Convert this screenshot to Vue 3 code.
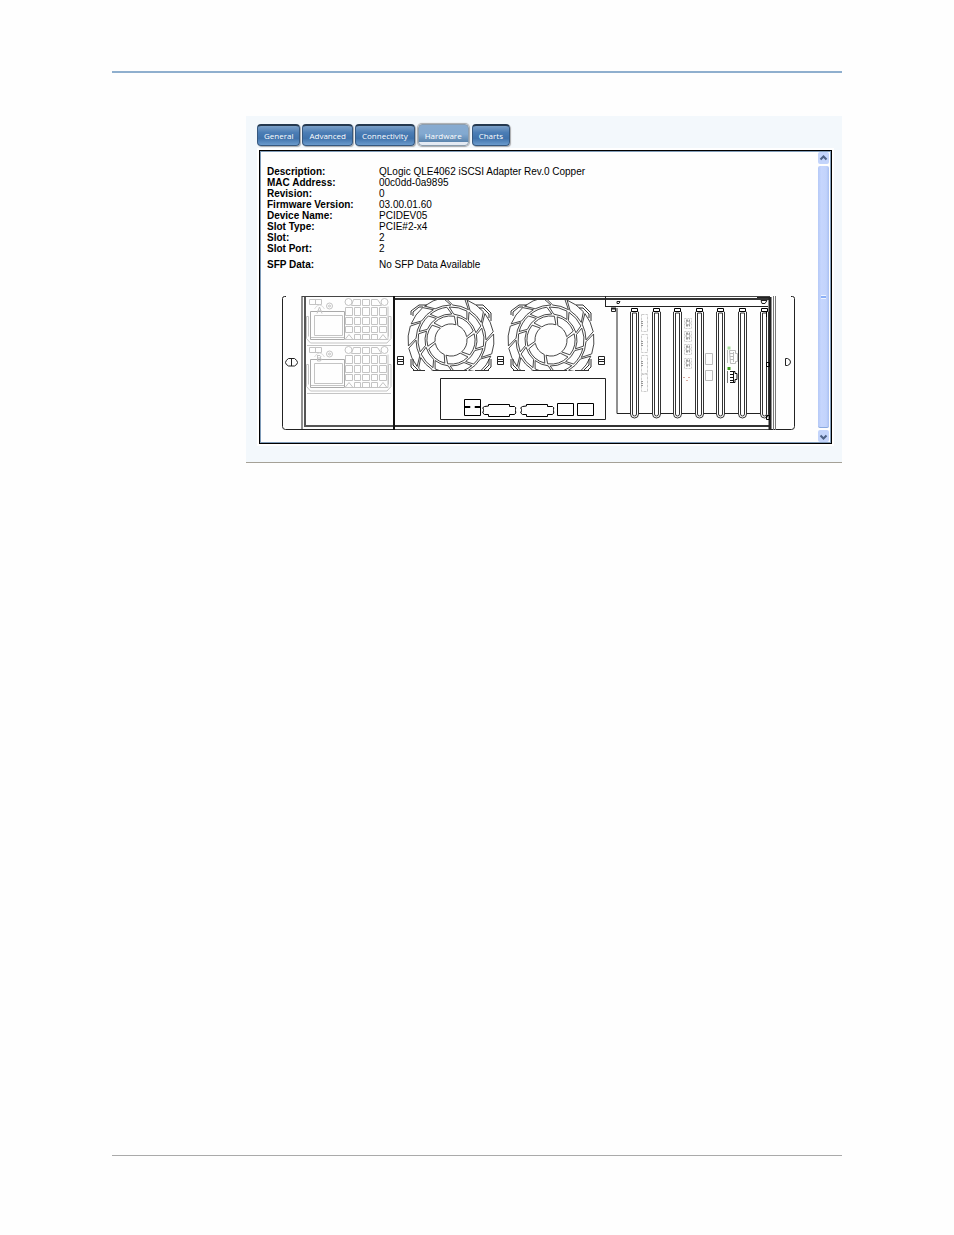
<script setup>
import { ref } from 'vue'

const tabs = ['General', 'Advanced', 'Connectivity', 'Hardware', 'Charts']
const active = ref('Hardware')

const details = [
  ['Description:', 'QLogic QLE4062 iSCSI Adapter Rev.0 Copper'],
  ['MAC Address:', '00c0dd-0a9895'],
  ['Revision:', '0'],
  ['Firmware Version:', '03.00.01.60'],
  ['Device Name:', 'PCIDEV05'],
  ['Slot Type:', 'PCIE#2-x4'],
  ['Slot:', '2'],
  ['Slot Port:', '2'],
  ['SFP Data:', 'No SFP Data Available']
]

// chassis drawing
const psus = [{ y: 0, name: 'A' }, { y: 48, name: 'B' }]
const fans = [451, 551]
const clips = [400, 500, 601]
const rails = [634, 656, 677, 699, 720, 742, 764]
const ports = [323, 336, 349, 363]

// fan guard: each ring is cut in cells, every cell leans along the swirl
const rings = [
  { r1: 16, r2: 24, n: 6, start: -5, skew: 10 },
  { r1: 26, r2: 33, n: 10, start: -12, skew: 9 },
  { r1: 35, r2: 43, n: 12, start: 3, skew: 11 }
]
const pt = (r, deg) => {
  const a = deg * Math.PI / 180
  return (r * Math.cos(a)).toFixed(2) + ' ' + (r * Math.sin(a)).toFixed(2)
}
const cells = rings.flatMap(({ r1, r2, n, start, skew }) => {
  const step = 360 / n
  const gap = 110 / r1
  return Array.from({ length: n }, (_, i) => {
    const a = start + i * step
    const b = a + step - gap
    return `M${pt(r1, a)}A${r1} ${r1} 0 0 1 ${pt(r1, b)}L${pt(r2, b - skew)}A${r2} ${r2} 0 0 0 ${pt(r2, a - skew)}Z`
  })
})
</script>

<template>
  <div class="page">
    <main class="panel">
      <nav class="tabs">
        <button v-for="t in tabs" :key="t" :class="{ active: t === active }" @click="active = t">{{ t }}</button>
      </nav>
      <section class="box">
        <div class="content">
          <table>
            <tbody>
              <tr v-for="[label, value] in details" :key="label">
                <th scope="row">{{ label }}</th>
                <td>{{ value }}</td>
              </tr>
            </tbody>
          </table>
          <svg class="chassis" viewBox="280 292 518 140" fill="none" stroke="#222">
            <defs>
              <clipPath id="fanclip"><rect x="-45" y="-40" width="90" height="71" /></clipPath>
            </defs>

            <!-- ears and frame -->
            <path d="M286 296.500h-1.500q-2 0-2 2v128q0 3 3 3H394M302 296v134M791 296.500h1.500q2 0 2 2v128q0 3-3 3H770" />
            <path d="M302 296.500H394M394 296.500H770M394 429.500H770" stroke="#444" />
            <path d="M394 299H770M394 426H770" stroke-width="2" stroke="#333" />
            <path d="M394 296v134" stroke-width="2" stroke="#111" />
            <path d="M305 297v129H393" stroke-width="2" stroke="#555" />
            <path d="M770 297v133" stroke-width="3" stroke="#222" />
            <path d="M773.500 296v134M775.500 296v134" stroke="#777" />
            <path d="M288.500 358.500h6q3 2 3 4t-3 3.500h-6q-3-1.500-3-3.500t3-4M291.500 358v8" />
            <path d="M785.500 358.500v7M785.500 358.500h2q3 1 3 3.500t-3 3.500h-2" />

            <!-- power supplies -->
            <g v-for="p in psus" :key="p.name" :transform="`translate(0 ${p.y})`" stroke="#c4c4c4">
              <path d="M306.500 316.500h2v20M306.500 316.500v22l4 4.500H387l4-4.500v-22h-2.500v20M307 345.500h84" />
              <path d="M309.500 299.500h12v5h-12zM315.500 299.500v5" />
              <circle cx="329.500" cy="306" r="3" /><circle cx="329.500" cy="306" r="1" />
              <path d="M310.500 311.500h34v28h-34z" stroke="#aaa" />
              <path d="M314.500 315.500h28v20h-28zM311 337.500h33" />
              <path d="M317 313.500l2.500-6.500 2.500 6.500M317.500 311h4" v-if="p.name === 'A'" />
              <path d="M317.500 307v6h3q1.500-1.500 0-3h-3M317.500 307.500h2.500q2 1.500 0 2.500" v-else />
              <path d="M314.500 309q2-4 5-4t5 4" stroke="#ddd" />
              <!-- vent holes -->
              <path d="M353.500 299.500h7v6h-9zM362.500 299.500h7v6h-7zM371.500 299.500h6l4 6h-10zM345.500 307.500h7v8h-7zM354.500 307.500h6v8h-6zM362.500 307.500h7v8h-7zM371.500 307.500h6v8h-6zM379.500 307.500h7v8h-7z" />
              <path d="M345.500 317.500h7v7h-7zM354.500 317.500h6v7h-6zM362.500 317.500h7v7h-7zM371.500 317.500h6v7h-6zM379.500 317.500h7v7h-7zM345.500 326.500h7v6h-7zM354.500 326.500h6v6h-6zM362.500 326.500h7v6h-7zM371.500 326.500h6v6h-6zM379.500 326.500h7v6h-7z" />
              <path d="M345 339.500l4-5 4 5M354.500 334.500h6v5h-6zM362.500 334.500h7v5h-7zM371.500 334.500h6v5h-6zM379 339.500l4-5 4 5M344 339.500h44v-33" />
              <g fill="#fff">
                <circle cx="348.500" cy="302" r="3.500" /><circle cx="384.500" cy="302" r="3.500" />
              </g>
            </g>

            <!-- fans -->
            <g v-for="x in fans" :key="x" :transform="`translate(${x} 340)`">
              <g clip-path="url(#fanclip)" stroke="#333">
                <path v-for="(d, i) in cells" :key="i" :d="d" stroke-width=".9" />
                <path d="M-40-25v-4l8-6h8M-38-24v-4l6-5h4M40-19v-8l-8-8h-7M38-22v-4l-6-6h-4M-40 19v8l5 5M-38 19v6l6 6M40 19v8l-5 5M38 19v6l-6 6" />
                <path d="M-38 30.500h12M-18 30.500h34M24 30.500h14" />
              </g>
            </g>
            <path v-for="x in clips" :key="x" :d="`M${x - 3}.500 356.500h6v8h-6zM${x - 3}.500 359.500h6M${x - 3}.500 361.500h6`" />

            <!-- io panel -->
            <path d="M440.500 378.500h165v41h-165z" />
            <path d="M464.500 399.500h16v16h-16zM465 407.500h5v-1h-5M480 407.500h-5v-1h5" stroke="#000" />
            <g v-for="x in [482, 520]" :key="x" :transform="`translate(${x} 404)`">
              <path d="M6.500 2V.5h21V2.500h5q2 1 1 3v1q1 3-1 4h-5v2h-21v-2h-4q-3-1-1-4v-1q-2-2 1-3z" stroke="#000" />
            </g>
            <path d="M557.500 403.500h16v12h-16zM577.500 403.500h16v12h-16z" stroke="#000" />

            <!-- slot bay -->
            <path d="M605.500 296v11M606 306.500H768M617 308v105.500H768" />
            <path d="M611.500 308.500h4v3h-4zM617 301.500h3l-1 2h-2zM757 297.500h12M761 300.500h6l-2 3h-3z" />
            <path d="M611 308.500h5" stroke-width="2" />
            <g v-for="x in rails" :key="x" :transform="`translate(${x} 308)`">
              <path d="M-3.500 4V106q0 4 4 4t4-4V4L2.500 2.500h-4z" fill="#fff" stroke="#333" />
              <path d="M-1.500 5V106q0 2 2 2t2-2V5z" stroke="#333" />
              <path d="M-2.500.5h6v3h-6z" fill="#fff" stroke="#000" />
            </g>
            <path d="M766.500 311v6M766.500 362.500h3v4h-3zM766.500 415.500h3v4h-3z" stroke="#000" />

            <!-- cards -->
            <g stroke="#ccc">
              <path d="M641.500 314.500h6v17h-6zM641.500 334.500h6v18h-6zM641.500 355.500h6v18h-6zM641.500 374.500h6v17h-6z" stroke-dasharray="3 1" />
              <path d="M642 321v5M642 341v5M642 361v5M642 381v5" stroke-dasharray="1 1" stroke-width="2" stroke="#999" />
            </g>
            <g v-for="y in ports" :key="y" :transform="`translate(684 ${y})`" stroke="#aaa">
              <path d="M.5-4.500h7v10h-7z" stroke="#ccc" stroke-dasharray="2 1" />
              <path d="M2-2.500h4M2 2.500h4" stroke-width="2" stroke="#999" stroke-dasharray="2 1" />
              <circle cx="4" cy="0" r="2" />
            </g>
            <path d="M683 377.500h2M688 377.500h2M686 380.500h2" stroke="#d8a9a0" />
            <path d="M705.500 353.500h7v11h-7zM705.500 370.500h7v10h-7z" stroke="#bbb" />
            <g stroke="#bbb">
              <path d="M727.500 350v13M729.500 350.500h6v3h2v8h-2v2h-5zM730 353.500h4M730 356.500h4M730 359.500h4M733.500 352v10" />
              <path d="M727.500 348h3" stroke="#a8dc9c" stroke-width="3" />
            </g>
            <g stroke="#111">
              <path d="M727.500 371v12" stroke="#777" />
              <path d="M730 371.500h5v2h2v6h-2v3h-5M730 374.500h4M730 377.500h4M730 380.500h4M733.500 372v10" />
              <path d="M727.500 368.500h3" stroke="#3f9c1c" stroke-width="3" />
            </g>
          </svg>
        </div>
        <div class="scrollbar">
          <button aria-label="Scroll up"><svg viewBox="0 0 11 11"><path d="M2.500 6.500l3-3 3 3" /></svg></button>
          <div class="thumb"><i></i></div>
          <button aria-label="Scroll down"><svg viewBox="0 0 11 11"><path d="M2.500 4.500l3 3 3-3" /></svg></button>
        </div>
      </section>
    </main>
  </div>
</template>

<style>
body {
  margin: 0;
  background: #fefefe;
}
</style>

<style scoped>
.page {
  box-sizing: border-box;
  min-height: 100vh;
  padding: 71px 112px 79px;
  display: flex;
  flex-direction: column;
  font-family: "Liberation Sans", Arial, sans-serif;
}
/*rules above and below the page body*/
.page::before {
  content: "";
  height: 2px;
  background: #8fafce;
}
.page::after {
  content: "";
  height: 1px;
  margin-top: auto;
  background: #aaa;
}
.panel {
  margin: 43px 0 0 134px;
  padding: 8px 10px 18px 11px;
  background: #f3f8fc;
  border-bottom: 1px solid #a5a197;
}
.tabs {
  display: flex;
  gap: 2px;
  margin-bottom: 4px;
}
.tabs button {
  height: 22px;
  padding: 0 6px;
  border: 1px solid #36587f;
  border-top: 2px solid #25394f;
  border-radius: 4px;
  background: linear-gradient(#7ba0c8, #4b7db5 35%, #3f72ab 65%, #6b9bcd);
  box-shadow: 1px 1px 1px 0 #a9aaac;
  color: #fff;
  font: 8px/18px "Open Sans", "Noto Sans", sans-serif;
}
.tabs button.active {
  border-color: #8b9dae;
  border-top-width: 1px;
  padding-top: 1px;
  background: linear-gradient(#88abd0, #82a9d0 45%, #5c85ae 84%, #e4eaf3 86%);
  box-shadow: 0 0 1px 1px #a9aaac;
  margin: 0 1px;
}
.box {
  display: flex;
  margin-left: 2px;
  border: 1px solid #000;
  box-shadow: 0 0 0 2px #fff, inset 0 0 0 1px #7f9bb8;
  background: #fefefe;
}
.content {
  flex: 1;
  min-width: 0;
  padding: 15px 0 11px 7px;
}
table {
  border-spacing: 0;
  font-size: 10px;
  line-height: 11px;
  color: #000;
}
th, td {
  padding: 0;
  text-align: left;
}
th {
  width: 112px;
}
tr:last-child > * {
  padding-top: 5px;
}
.chassis {
  display: block;
  width: 100%;
  max-width: 518px;
  margin: 22px 0 0 13px;
}
.scrollbar {
  display: flex;
  flex-direction: column;
  gap: 2px;
  width: 11px;
  padding: 1px 2px 1px 0;
}
.scrollbar button {
  height: 12px;
  padding: 0;
  border: 0;
  border-radius: 2px;
  background: #c3d4fb;
}
.scrollbar svg {
  display: block;
  width: 11px;
  height: 11px;
  fill: none;
  stroke: #4d6185;
  stroke-width: 2;
}
.thumb {
  flex: 1;
  display: flex;
  align-items: center;
  justify-content: center;
  border-radius: 2px;
  background: linear-gradient(90deg, #b5c9f7, #c6d6fd 30%, #c2d3fb 75%, #a9c0f2);
  border-bottom: 1px solid #8aa9e0;
}
.thumb i {
  width: 5px;
  height: 2px;
  border: solid #eef4fe;
  border-width: 1px 0;
  background: #8cb0f8;
}
</style>
